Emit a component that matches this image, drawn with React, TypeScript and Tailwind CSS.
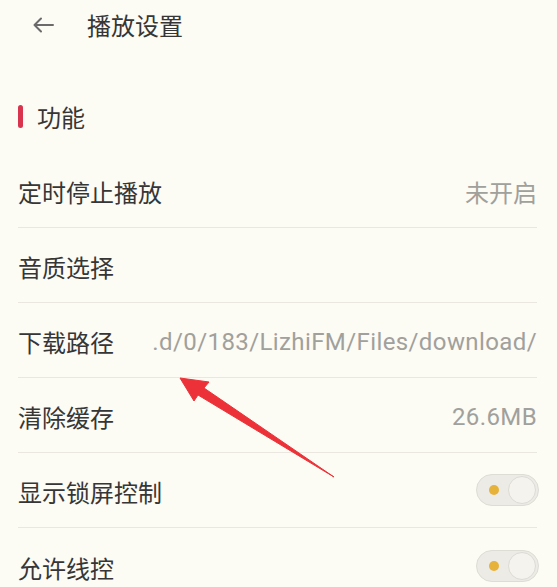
const font = { fontFamily: '"Noto Sans CJK SC", "Noto Sans", sans-serif' };

function Toggle() {
  return (
    <div className="flex h-[32px] w-[63px] items-center rounded-full border border-[#dddcd5] bg-[#ecebe5] pl-[12px] pr-[2px]">
      <span className="h-[10px] w-[10px] rounded-full bg-[#e6b23a]" />
      <span className="ml-auto h-[28px] w-[28px] rounded-full border border-[#dcdbd4] bg-[#f4f3ee]" />
    </div>
  );
}

const rows: { label: string; value?: string; toggle?: boolean; latin?: boolean }[] = [
  { label: "定时停止播放", value: "未开启" },
  { label: "音质选择" },
  { label: "下载路径", value: ".d/0/183/LizhiFM/Files/download/", latin: true },
  { label: "清除缓存", value: "26.6MB", latin: true },
  { label: "显示锁屏控制", toggle: true },
  { label: "允许线控", toggle: true },
];

export default function App() {
  return (
    <div className="relative h-[587px] w-[557px] overflow-hidden bg-[#fcfbf4] text-[#363636]" style={font}>
      {/* Header */}
      <div className="flex h-[50px] items-center pl-[33px]">
        <svg width="21" height="16" viewBox="0 0 21 16" fill="none" stroke="#6b6b6b" strokeWidth="2" strokeLinecap="round" strokeLinejoin="round">
          <path d="M20 8H1.5M8 1.5 1.5 8 8 14.5" />
        </svg>
        <span className="ml-[33px] text-[24px] leading-[32px]">播放设置</span>
      </div>

      {/* Section */}
      <div className="flex h-[103px] items-center pl-[18px] pt-[30px]">
        <span className="h-[23px] w-[5px] rounded-full bg-[#d8344e]" />
        <span className="ml-[14px] text-[24px] leading-[32px]">功能</span>
      </div>

      {/* Rows */}
      <div className="pl-[18px] pr-[20px]">
        {rows.map((r) => (
          <div
            key={r.label}
            className="flex h-[75px] items-center border-b border-[#e9e7df] pt-[4px] last:border-b-0"
          >
            <span className="shrink-0 text-[24px] leading-[32px]">{r.label}</span>
            {r.value && (
              <span
                className={
                  r.latin
                    ? "ml-auto whitespace-nowrap pl-[30px] text-[24px] leading-[32px] tracking-[0.4px] text-[#a0a09c]"
                    : "ml-auto whitespace-nowrap pl-[30px] text-[24px] leading-[32px] text-[#a0a09c]"
                }
                style={r.latin ? { fontFamily: 'Roboto, "Noto Sans", sans-serif' } : undefined}
              >
                {r.value}
              </span>
            )}
            {r.toggle && (
              <div className="ml-auto -mr-[2px] -mt-[4px]">
                <Toggle />
              </div>
            )}
          </div>
        ))}
      </div>

      {/* Annotation arrow */}
      <svg className="pointer-events-none absolute left-0 top-0" width="557" height="587" viewBox="0 0 557 587">
        <polygon
          points="180,378 209,382 204,388 334,477 198,395 194,401"
          fill="#ec3238"
          stroke="#ec3238"
          strokeWidth="1"
          strokeLinejoin="round"
        />
      </svg>
    </div>
  );
}
